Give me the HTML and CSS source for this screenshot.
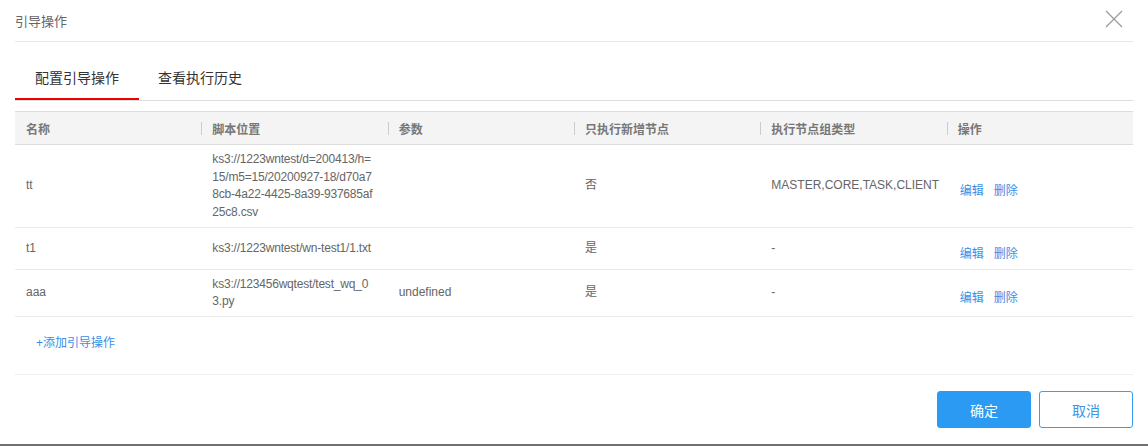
FILE: index.html
```
<!doctype html>
<html>
    <head>
        <title>引导操作</title>
        <meta charset="UTF-8">
        <link rel="stylesheet" href="styles.css">
    </head>
    <body>
       <div class="dialog">
         <div class="dialog-head">
           <span class="dialog-title">引导操作</span>
           <span class="close">
             <svg width="18" height="18" viewBox="0 0 18 18">
               <path d="M1 1 L17 17 M17 1 L1 17" stroke="#9a9a9a" stroke-width="1.2" fill="none"/>
             </svg>
           </span>
         </div>

         <div class="tabs">
           <span class="tab active">配置引导操作</span>
           <span class="tab">查看执行历史</span>
         </div>

         <table class="grid">
           <thead>
             <tr>
               <th>名称</th>
               <th><span class="sep"></span>脚本位置</th>
               <th><span class="sep"></span>参数</th>
               <th><span class="sep"></span>只执行新增节点</th>
               <th><span class="sep"></span>执行节点组类型</th>
               <th><span class="sep"></span>操作</th>
             </tr>
           </thead>
           <tbody>
             <tr>
               <td>tt</td>
               <td class="path">ks3://1223wntest/d=200413/h=15/m5=15/20200927-18/d70a78cb-4a22-4425-8a39-937685af25c8.csv</td>
               <td></td>
               <td>否</td>
               <td>MASTER,CORE,TASK,CLIENT</td>
               <td><span class="ops"><a>编辑</a><a>删除</a></span></td>
             </tr>
             <tr>
               <td>t1</td>
               <td class="path">ks3://1223wntest/wn-test1/1.txt</td>
               <td></td>
               <td>是</td>
               <td>-</td>
               <td><span class="ops"><a>编辑</a><a>删除</a></span></td>
             </tr>
             <tr>
               <td>aaa</td>
               <td class="path">ks3://123456wqtest/test_wq_03.py</td>
               <td>undefined</td>
               <td>是</td>
               <td>-</td>
               <td><span class="ops"><a>编辑</a><a>删除</a></span></td>
             </tr>
           </tbody>
         </table>

         <div class="add-row"><a class="add">+添加引导操作</a></div>

         <div class="dialog-foot">
           <button type="button" class="btn primary">确定</button>
           <button type="button" class="btn">取消</button>
         </div>
       </div>
       <div class="shade"></div>
    </body>
</html>
```

FILE: styles.css
```
body {
    margin: 0;
    background: #fff;
    font-family: "Liberation Sans", "Noto Sans CJK SC", sans-serif;
    color: #666;
    font-size: 12px;
}

.dialog {
    padding: 0 15px;
    height: 444px;
    box-sizing: border-box;
}

.dialog-head {
    height: 41px;
    border-bottom: 1px solid #e8e8e8;
    display: flex;
    align-items: center;
    justify-content: space-between;
}

.dialog-title {
    font-size: 13px;
    color: #666;
    margin-top: -1px;
}

.close {
    display: flex;
    margin-right: 10px;
    margin-top: -3px;
}

.tabs {
    margin-top: 16px;
    border-bottom: 1px solid #ddd;
    display: flex;
}

.tab {
    padding: 0 20px 0 20px;
    height: 40px;
    line-height: 41px;
    font-size: 14px;
    color: #333;
    border-bottom: 2px solid transparent;
}

.tab.active {
    border-bottom-color: #ee0000;
}

.tab + .tab {
    padding-left: 19px;
}

.grid {
    margin-top: 10px;
    width: 100%;
    border-collapse: collapse;
    table-layout: fixed;
}

.grid th {
    position: relative;
    background: #f4f4f4;
    border-top: 1px solid #ddd;
    border-bottom: 1px solid #ddd;
    height: 32px;
    padding: 0 11px;
    text-align: left;
    font-weight: bold;
    color: #777;
    font-size: 12px;
}

.sep {
    position: absolute;
    left: 0;
    top: 10px;
    height: 13px;
    border-left: 1px solid #ccc;
}

.grid td {
    padding: 6px 11px 5.5px;
    border-bottom: 1px solid #ebebeb;
    line-height: 17.5px;
    vertical-align: middle;
    color: #666;
}

.path {
    word-break: break-all;
    letter-spacing: -0.2px;
}

.ops {
    display: inline-block;
    padding-top: 12px;
    padding-left: 2px;
}

.ops a, .add {
    color: #3a8ee6;
    cursor: pointer;
}

.ops a + a {
    margin-left: 10px;
}

.add-row {
    padding: 17px 21px 22px;
    line-height: 18px;
    border-bottom: 1px solid #eee;
}

.dialog-foot {
    padding-top: 16px;
    display: flex;
    justify-content: flex-end;
    gap: 8px;
}

.btn {
    width: 94px;
    height: 37px;
    border-radius: 3px;
    border: 1px solid #3d9cf0;
    background: #fff;
    color: #3a94e8;
    font-size: 14px;
    font-family: "Liberation Sans", "Noto Sans CJK SC", sans-serif;
}

.btn.primary {
    background: #2b9af3;
    border-color: #2b9af3;
    color: #fff;
}

.shade {
    height: 2px;
    background: #707070;
}
```
